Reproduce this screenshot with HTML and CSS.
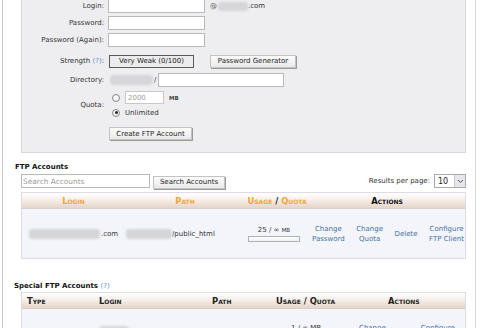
FILE: index.html
```html
<!DOCTYPE html>
<html>
<head>
<meta charset="utf-8">
<link rel="stylesheet" href="styles.css">
</head>
<body>
<div class="page">
  <div class="form-box">
    <div class="row r-login">
      <label class="lbl">Login:</label>
      <input class="field w97" type="text">
      <span class="at">@</span><span class="blur b-dom"></span><span class="txt">.com</span>
    </div>
    <div class="row r-pass">
      <label class="lbl">Password:</label>
      <input class="field w97" type="password">
    </div>
    <div class="row r-pass">
      <label class="lbl">Password (Again):</label>
      <input class="field w97" type="password">
    </div>
    <div class="row r-strength">
      <label class="lbl">Strength <span class="help">(?)</span>:</label>
      <span class="btn strength">Very Weak (0/100)</span>
      <span class="btn gen">Password Generator</span>
    </div>
    <div class="row r-dir">
      <label class="lbl">Directory:</label>
      <span class="blur b-dir"></span><span class="slash">/</span>
      <input class="field w126" type="text">
    </div>
    <div class="row r-quota">
      <label class="lbl">Quota:</label>
      <div class="quota-opts">
        <div class="opt"><span class="radio"></span><span class="field q-in">2000</span><span class="mb">MB</span></div>
        <div class="opt"><span class="radio on"></span><span class="txt">Unlimited</span></div>
      </div>
    </div>
    <div class="row r-create">
      <span class="lbl"></span>
      <span class="btn create">Create FTP Account</span>
    </div>
  </div>

  <h2 class="title t-ftp">FTP Accounts</h2>
  <div class="toolbar">
    <span class="field search">Search Accounts</span>
    <span class="btn search-btn">Search Accounts</span>
    <span class="spacer"></span>
    <span class="rpp">Results per page:</span>
    <span class="select"><span class="sel-val">10</span><span class="sel-arrow"><svg width="7" height="5" viewBox="0 0 7 5"><path d="M1 1 L3.5 3.5 L6 1" fill="none" stroke="#555" stroke-width="1"/></svg></span></span>
  </div>

  <div class="table t1">
    <div class="thead cols1">
      <span class="th c">Login</span>
      <span class="th c">Path</span>
      <span class="th c"><span class="o">Usage</span> <span class="dk">/</span> <span class="o">Quota</span></span>
      <span class="th c dk">Actions</span>
    </div>
    <div class="tbody cols1 row1">
      <span class="td c"><span class="blur b-login"></span>.com</span>
      <span class="td l"><span class="blur b-path"></span>/public_html</span>
      <span class="td c usage"><span>25 / ∞ <span class="sm">MB</span></span><span class="bar"></span></span>
      <span class="td actions">
        <a>Change<br>Password</a>
        <a>Change<br>Quota</a>
        <a>Delete</a>
        <a>Configure<br>FTP Client</a>
      </span>
    </div>
  </div>

  <h2 class="title t-special">Special FTP Accounts <span class="help">(?)</span></h2>
  <div class="table t2">
    <div class="thead cols2">
      <span class="th2">Type</span>
      <span class="th2">Login</span>
      <span class="th2">Path</span>
      <span class="th2">Usage / Quota</span>
      <span class="th2">Actions</span>
    </div>
    <div class="tbody cols2 row2">
      <span class="td2"></span>
      <span class="td2"><span class="blur b-login2"></span></span>
      <span class="td2"></span>
      <span class="td2 u2">1 / ∞ MB</span>
      <span class="td2 a2"><a>Change</a><a>Configure</a></span>
    </div>
  </div>
</div>
</body>
</html>
```

FILE: styles.css
```css
* { box-sizing: border-box; }
html, body { margin: 0; padding: 0; background: #fff; }
body {
  font-family: "DejaVu Sans", Verdana, sans-serif;
  font-size: 7px;
  color: #333;
  width: 480px;
  height: 328px;
  overflow: hidden;
}
.page {
  margin-left: 2px;
  width: 474px;
  height: 340px;
  border-left: 1px solid #c9c9c9;
  border-right: 1px solid #dadada;
  padding-left: 18px;
  padding-right: 9px;
}
.form-box {
  margin-top: -1px;
  background: #eeeef0;
  border: 1px solid #d9d9dd;
  border-top: none;
  padding: 0 0 13px 0;
  height: 154px;
}
.row { display: flex; align-items: center; height: 14px; }
.lbl { width: 82px; text-align: right; margin-right: 4px; color: #333; flex: none; }
.r-pass { margin-top: 3px; }
.r-strength { margin-top: 7px; }
.r-dir { margin-top: 5px; }
.r-quota { margin-top: 4px; height: 28px; }
.r-create { margin-top: 8px; height: 13px; }
.field {
  height: 14px;
  border: 1px solid #b9b9bd;
  background: #fff;
  font: inherit;
  padding: 0 2px;
  outline: none;
}
.w97 { width: 97px; }
.w126 { width: 126px; }
.at { margin-left: 5px; color: #555; }
.blur {
  display: inline-block;
  background: #d6d6d8;
  filter: blur(1.2px);
  border-radius: 3px;
}
.b-dom { width: 30px; height: 9px; margin-left: 1px; }
.txt { color: #333; }
.help { color: #5b8fc4; font-weight: normal; }
.btn {
  display: inline-flex;
  align-items: center;
  justify-content: center;
  height: 13px;
  background: linear-gradient(#fcfcfc, #e9e9e9);
  border: 1px solid #c3c3c3;
  box-shadow: 1px 1px 0 #9a9a9a;
  color: #222;
  white-space: nowrap;
}
.strength { width: 85px; margin-left: 1px; border: 1px solid #5a5a5a; box-shadow: none; background: #ececec; }
.gen { width: 86px; margin-left: 16px; }
.b-dir { width: 43px; height: 10px; margin-left: 2px; }
.slash { margin: 0 2px 0 1px; }
.quota-opts { display: flex; flex-direction: column; gap: 2px; }
.opt { display: flex; align-items: center; height: 13px; }
.radio {
  width: 8px; height: 8px; border-radius: 50%;
  border: 1px solid #8a8a8a;
  background: radial-gradient(#fff, #e6e6e6);
  margin: 0 5px 0 4px;
  position: relative;
}
.radio.on::after {
  content: "";
  position: absolute;
  left: 1.5px; top: 1.5px;
  width: 3px; height: 3px; border-radius: 50%;
  background: #222;
}
.q-in { width: 39px; height: 13px; color: #a0a0a0; display: inline-flex; align-items: center; border-color: #c8c8cc; }
.mb { margin-left: 5px; font-size: 5.5px; font-weight: bold; color: #444; }
.create { width: 83px; margin-left: 1px; }

.title { font-size: 7px; font-weight: bold; color: #111; margin: 0; }
.t-ftp { margin: 10px 0 0 -6px; height: 9px; line-height: 9px; }
.toolbar { display: flex; align-items: center; height: 16px; margin-top: 1px; }
.search { width: 129px; height: 14px; color: #9a9a9a; display: inline-flex; align-items: center; padding-left: 1px; font-size: 7.4px; }
.search-btn { width: 72px; margin-left: 3px; margin-top: 2px; }
.spacer { flex: 1; }
.rpp { margin-right: 4px; color: #333; }
.select {
  width: 32px; height: 14px; border: 1px solid #a9a9b5; background: #fff;
  display: inline-flex; align-items: stretch; font-size: 8px;
}
.sel-val { flex: 1; padding-left: 3px; display: flex; align-items: center; color: #222; }
.sel-arrow { width: 11px; background: #e6e6ec; border-left: 1px solid #c8c8d0; display: flex; align-items: center; justify-content: center; }

.table { border: 1px solid #dcdce2; margin-top: 3px; }
.thead {
  height: 16px;
  background: linear-gradient(#ffffff 0%, #f6efe9 45%, #e6d4c7 100%);
  border-bottom: 1px solid #d9cfc8;
  align-items: center;
}
.cols1 { display: grid; grid-template-columns: 103px 120px 64px 1fr; }
.th {
  font-weight: bold;
  font-variant: small-caps;
  color: #f0a53a;
  font-size: 8.4px;
  text-align: center;
  white-space: nowrap;
}
.th .o { color: #f0a53a; }
.dk { color: #111 !important; }
.tbody { background: #f4f5fb; }
.row1 { height: 49px; align-items: center; }
.td { color: #333; }
.c { text-align: center; }
.l { text-align: left; }
.b-login { width: 71px; height: 10px; vertical-align: middle; margin-right: 1px; }
.b-path { width: 46px; height: 10px; vertical-align: middle; margin-left: 1px; }
.usage { display: flex; flex-direction: column; align-items: center; gap: 2px; margin-left: -6px; }
.sm { font-size: 5.5px; }
.bar { width: 52px; height: 6px; border: 1px solid #b0b0b8; background: linear-gradient(#fff, #f0f0f0); }
.actions { display: flex; justify-content: space-between; align-items: center; padding: 0 1px 0 3px; line-height: 10px; }
.actions a { color: #44739e; text-align: center; }

.t-special { margin: 23px 0 0 -7px; height: 9px; line-height: 9px; }
.t2 { margin-top: 1px; }
.cols2 { display: grid; grid-template-columns: 77px 113px 64px 112px 1fr; }
.th2 { font-weight: bold; font-variant: small-caps; color: #222; font-size: 8.4px; white-space: nowrap; }
.th2:first-child { padding-left: 5px; }
.row2 { height: 30px; padding-top: 15px; }
.b-login2 { width: 30px; height: 10px; margin-top: 2px; }
.u2 { padding-left: 15px; }
.a2 { display: flex; gap: 35px; margin-left: -29px; }
.a2 a { color: #44739e; }
```
